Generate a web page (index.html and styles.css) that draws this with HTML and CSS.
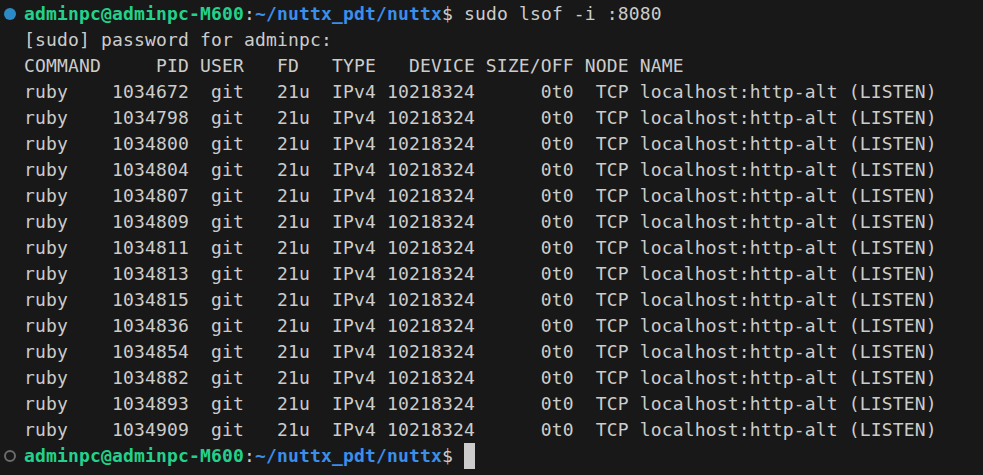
FILE: index.html
```html
<!DOCTYPE html>
<html>
<head>
<meta charset="utf-8">
<link rel="stylesheet" href="styles.css">
</head>
<body>
<div class="term">
<div class="line"><span class="gutter"><span class="dot ok"></span></span><span class="txt"><span class="user">adminpc@adminpc-M600</span>:<span class="path">~/nuttx_pdt/nuttx</span>$ sudo lsof -i :8080</span></div>
<div class="line"><span class="gutter"></span><span class="txt">[sudo] password for adminpc:</span></div>
<div class="line"><span class="gutter"></span><span class="txt">COMMAND     PID USER   FD   TYPE   DEVICE SIZE/OFF NODE NAME</span></div>
<div class="line"><span class="gutter"></span><span class="txt">ruby    1034672  git   21u  IPv4 10218324      0t0  TCP localhost:http-alt (LISTEN)</span></div>
<div class="line"><span class="gutter"></span><span class="txt">ruby    1034798  git   21u  IPv4 10218324      0t0  TCP localhost:http-alt (LISTEN)</span></div>
<div class="line"><span class="gutter"></span><span class="txt">ruby    1034800  git   21u  IPv4 10218324      0t0  TCP localhost:http-alt (LISTEN)</span></div>
<div class="line"><span class="gutter"></span><span class="txt">ruby    1034804  git   21u  IPv4 10218324      0t0  TCP localhost:http-alt (LISTEN)</span></div>
<div class="line"><span class="gutter"></span><span class="txt">ruby    1034807  git   21u  IPv4 10218324      0t0  TCP localhost:http-alt (LISTEN)</span></div>
<div class="line"><span class="gutter"></span><span class="txt">ruby    1034809  git   21u  IPv4 10218324      0t0  TCP localhost:http-alt (LISTEN)</span></div>
<div class="line"><span class="gutter"></span><span class="txt">ruby    1034811  git   21u  IPv4 10218324      0t0  TCP localhost:http-alt (LISTEN)</span></div>
<div class="line"><span class="gutter"></span><span class="txt">ruby    1034813  git   21u  IPv4 10218324      0t0  TCP localhost:http-alt (LISTEN)</span></div>
<div class="line"><span class="gutter"></span><span class="txt">ruby    1034815  git   21u  IPv4 10218324      0t0  TCP localhost:http-alt (LISTEN)</span></div>
<div class="line"><span class="gutter"></span><span class="txt">ruby    1034836  git   21u  IPv4 10218324      0t0  TCP localhost:http-alt (LISTEN)</span></div>
<div class="line"><span class="gutter"></span><span class="txt">ruby    1034854  git   21u  IPv4 10218324      0t0  TCP localhost:http-alt (LISTEN)</span></div>
<div class="line"><span class="gutter"></span><span class="txt">ruby    1034882  git   21u  IPv4 10218324      0t0  TCP localhost:http-alt (LISTEN)</span></div>
<div class="line"><span class="gutter"></span><span class="txt">ruby    1034893  git   21u  IPv4 10218324      0t0  TCP localhost:http-alt (LISTEN)</span></div>
<div class="line"><span class="gutter"></span><span class="txt">ruby    1034909  git   21u  IPv4 10218324      0t0  TCP localhost:http-alt (LISTEN)</span></div>
<div class="line"><span class="gutter"><span class="dot idle"></span></span><span class="txt"><span class="user">adminpc@adminpc-M600</span>:<span class="path">~/nuttx_pdt/nuttx</span>$ <span class="cursor"> </span></span></div>
</div>
</body>
</html>
```
FILE: styles.css
```css
html, body {
  margin: 0;
  padding: 0;
  background: #181818;
}
.term {
  width: 983px;
  height: 475px;
  box-sizing: border-box;
  padding-top: 1px;
  background: #181818;
  color: #cccccc;
  font-family: "DejaVu Sans Mono", "Liberation Mono", monospace;
  font-size: 18px;
  letter-spacing: 0.16px;
  overflow: hidden;
}
.line {
  display: flex;
  align-items: center;
  height: 26px;
}
.gutter {
  width: 24px;
  flex: 0 0 24px;
  display: flex;
  align-items: center;
  justify-content: center;
  padding-right: 5px;
  box-sizing: border-box;
}
.txt {
  white-space: pre;
  line-height: 26px;
}
.dot {
  width: 12px;
  height: 12px;
  border-radius: 50%;
  box-sizing: border-box;
  display: block;
}
.dot.ok {
  background: #2c8bc6;
}
.dot.idle {
  border: 2px solid #6b6b6b;
}
.user {
  color: #23d18b;
  font-weight: bold;
}
.path {
  color: #3b8eea;
  font-weight: bold;
}
.cursor {
  display: inline-block;
  width: 11px;
  height: 26px;
  vertical-align: top;
  background: #cccccc;
}
```
